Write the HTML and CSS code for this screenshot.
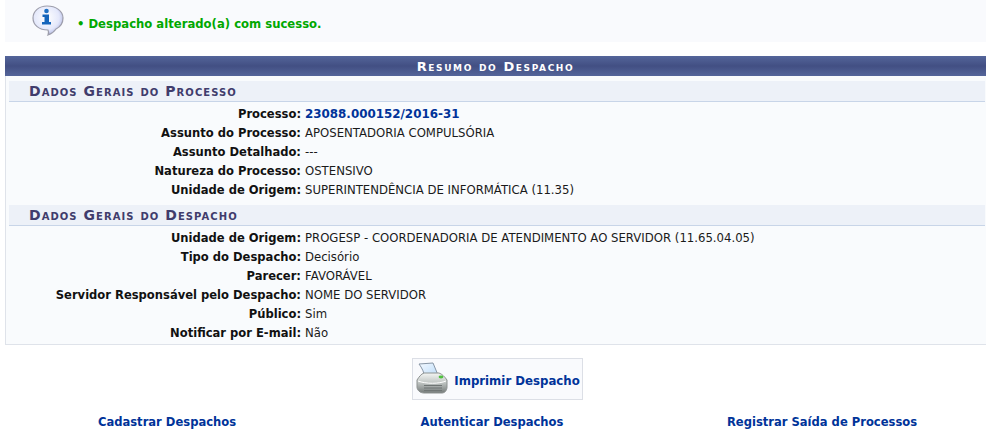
FILE: index.html
```html
<!DOCTYPE html>
<html lang="pt-BR">
<head>
    <meta charset="UTF-8">
    <title>Resumo do Despacho</title>
    <link rel="stylesheet" href="styles.css">
</head>
<body>

    <!-- Mensagem -->
    <div class="message">
        <svg class="info-icon" width="32" height="32" viewBox="0 0 32 32">
            <defs>
                <radialGradient id="bubble" cx="0.45" cy="0.4" r="0.7">
                    <stop offset="0" stop-color="#ffffff"/>
                    <stop offset="0.6" stop-color="#e4e8fb"/>
                    <stop offset="1" stop-color="#9aa1d8"/>
                </radialGradient>
            </defs>
            <path d="M15 1C7 1 1 6 1 13c0 7 6 12 15 12 1 2 1 3 0 5 3-1 6-3 8-6 4-2 7-6 7-11C31 6 24 1 15 1z" fill="url(#bubble)" stroke="#9d9dab" stroke-width="1.200"/>
            <circle cx="14.500" cy="6" r="2.300" fill="#1d6fc4"/>
            <path d="M10.500 9.500h6.500v7.500h2v2.500h-9v-2.500h2.500v-5h-2z" fill="#1464bb"/>
        </svg>
        <ul>
            <li>Despacho alterado(a) com sucesso.</li>
        </ul>
    </div>

    <!-- Resumo -->
    <div class="title-bar">Resumo do Despacho</div>
    <div class="panel">
        <h3>Dados Gerais do Processo</h3>
        <table>
            <tr><th>Processo:</th><td><a class="process-link" href="#">23088.000152/2016-31</a></td></tr>
            <tr><th>Assunto do Processo:</th><td>APOSENTADORIA COMPULSÓRIA</td></tr>
            <tr><th>Assunto Detalhado:</th><td>---</td></tr>
            <tr><th>Natureza do Processo:</th><td>OSTENSIVO</td></tr>
            <tr><th>Unidade de Origem:</th><td>SUPERINTENDÊNCIA DE INFORMÁTICA (11.35)</td></tr>
        </table>

        <h3>Dados Gerais do Despacho</h3>
        <table>
            <tr><th>Unidade de Origem:</th><td>PROGESP - COORDENADORIA DE ATENDIMENTO AO SERVIDOR (11.65.04.05)</td></tr>
            <tr><th>Tipo do Despacho:</th><td>Decisório</td></tr>
            <tr><th>Parecer:</th><td>FAVORÁVEL</td></tr>
            <tr><th>Servidor Responsável pelo Despacho:</th><td>NOME DO SERVIDOR</td></tr>
            <tr><th>Público:</th><td>Sim</td></tr>
            <tr><th>Notificar por E-mail:</th><td>Não</td></tr>
        </table>
    </div>

    <!-- Imprimir -->
    <div class="print-row">
        <a class="print-button" href="#">
            <svg width="36" height="34" viewBox="0 0 36 34">
                <defs>
                    <linearGradient id="body" x1="0" y1="0" x2="0" y2="1">
                        <stop offset="0" stop-color="#f4f6f4"/>
                        <stop offset="0.45" stop-color="#c4c9c7"/>
                        <stop offset="1" stop-color="#747a79"/>
                    </linearGradient>
                    <linearGradient id="sheet" x1="0" y1="0" x2="1" y2="1">
                        <stop offset="0" stop-color="#f4f9ff"/>
                        <stop offset="1" stop-color="#b8daf9"/>
                    </linearGradient>
                </defs>
                <path d="M3 2L17 1l5 12-13 3C8 10 6 6 3 2z" fill="url(#sheet)" stroke="#8795a5" stroke-width="1"/>
                <path d="M1 18c2-3 4-6 7-7h15c3 1 6 4 8 7v7c0 3-2 6-5 6H8c-4 0-7-3-7-6z" fill="url(#body)" stroke="#8d9291" stroke-width="1"/>
                <path d="M2 19c8 3 21 3 28 0" fill="none" stroke="#ffffff" stroke-width="1"/>
                <path d="M8 23.500h18M8 26h18M8 28.500h18" stroke="#6f7574" stroke-width="1.100"/>
                <ellipse cx="25" cy="15" rx="2.400" ry="1.400" fill="#4fc03f"/>
            </svg>
            <span class="print-label">Imprimir Despacho</span>
        </a>
    </div>

    <!-- Links -->
    <div class="links">
        <a href="#">Cadastrar Despachos</a>
        <a href="#">Autenticar Despachos</a>
        <a href="#">Registrar Saída de Processos</a>
    </div>

</body>
</html>
```

FILE: styles.css
```css
body {
    background-color: #ffffff;
    color: #1a1a1a;
    font-family: 'DejaVu Sans', Verdana, sans-serif;
    font-size: 11.7px;
    margin: 0;
    padding: 0;
}

a {
    color: #003399;
    font-size: 11.55px;
    font-weight: bold;
    text-decoration: none;
}

.message {
    display: flex;
    align-items: center;
    height: 42px;
    margin-left: 5px;
    background-color: #f9fafd;
}

.info-icon {
    margin-left: 27px;
}

.message ul {
    margin: 6px 0 0 13px;
    padding: 0;
    list-style: none;
    color: #00a800;
    font-weight: bold;
    font-size: 11.65px;
}

.message li::before {
    content: "\2022";
    margin-right: 4px;
}

.title-bar {
    height: 20px;
    line-height: 21px;
    margin: 14px 0 0 5px;
    background: linear-gradient(#54659a, #424f83 50%, #54659a);
    color: #ffffff;
    font-weight: bold;
    font-variant: small-caps;
    font-size: 13px;
    letter-spacing: 1.6px;
    text-align: center;
}

.panel {
    margin-left: 5px;
    padding: 5px 1px 1px 3px;
    height: 262px;
    background-color: #f9fbfd;
    border-left: 1px solid #dfe3ea;
    border-bottom: 1px solid #dfe3ea;
}

.panel h3 {
    margin: 0;
    height: 20px;
    padding-left: 20px;
    line-height: 20px;
    background-color: #edf1f8;
    border-bottom: 1px solid #c8d5e8;
    color: #403c6c;
    font-size: 14px;
    font-variant: small-caps;
    font-weight: bold;
    letter-spacing: 1.05px;
}

.panel table {
    width: 100%;
    border-collapse: collapse;
    margin-top: 3px;
    margin-bottom: 5px;
}

.panel th,
.panel td {
    height: 19px;
    padding: 0;
    line-height: 19px;
}

.panel th {
    width: 292px;
    padding-right: 3px;
    color: #111111;
    font-size: 11.55px;
    text-align: right;
    white-space: nowrap;
}

.panel td {
    padding-left: 1px;
}

.panel .process-link {
    font-size: 11.9px;
}

.print-row {
    display: flex;
    justify-content: center;
    margin: 13px 0 0 9px;
}

.print-button {
    display: flex;
    align-items: center;
    gap: 2px;
    height: 40px;
    padding: 0 2px 0 3px;
    background-color: #f9fafd;
    border: 1px solid #dcdfe6;
    font-size: 11.75px;
}

.print-label {
    padding-top: 3px;
}

.links {
    display: grid;
    grid-template-columns: 318px 332px 328px;
    margin-top: 15px;
    padding-left: 8px;
    text-align: center;
}
```
